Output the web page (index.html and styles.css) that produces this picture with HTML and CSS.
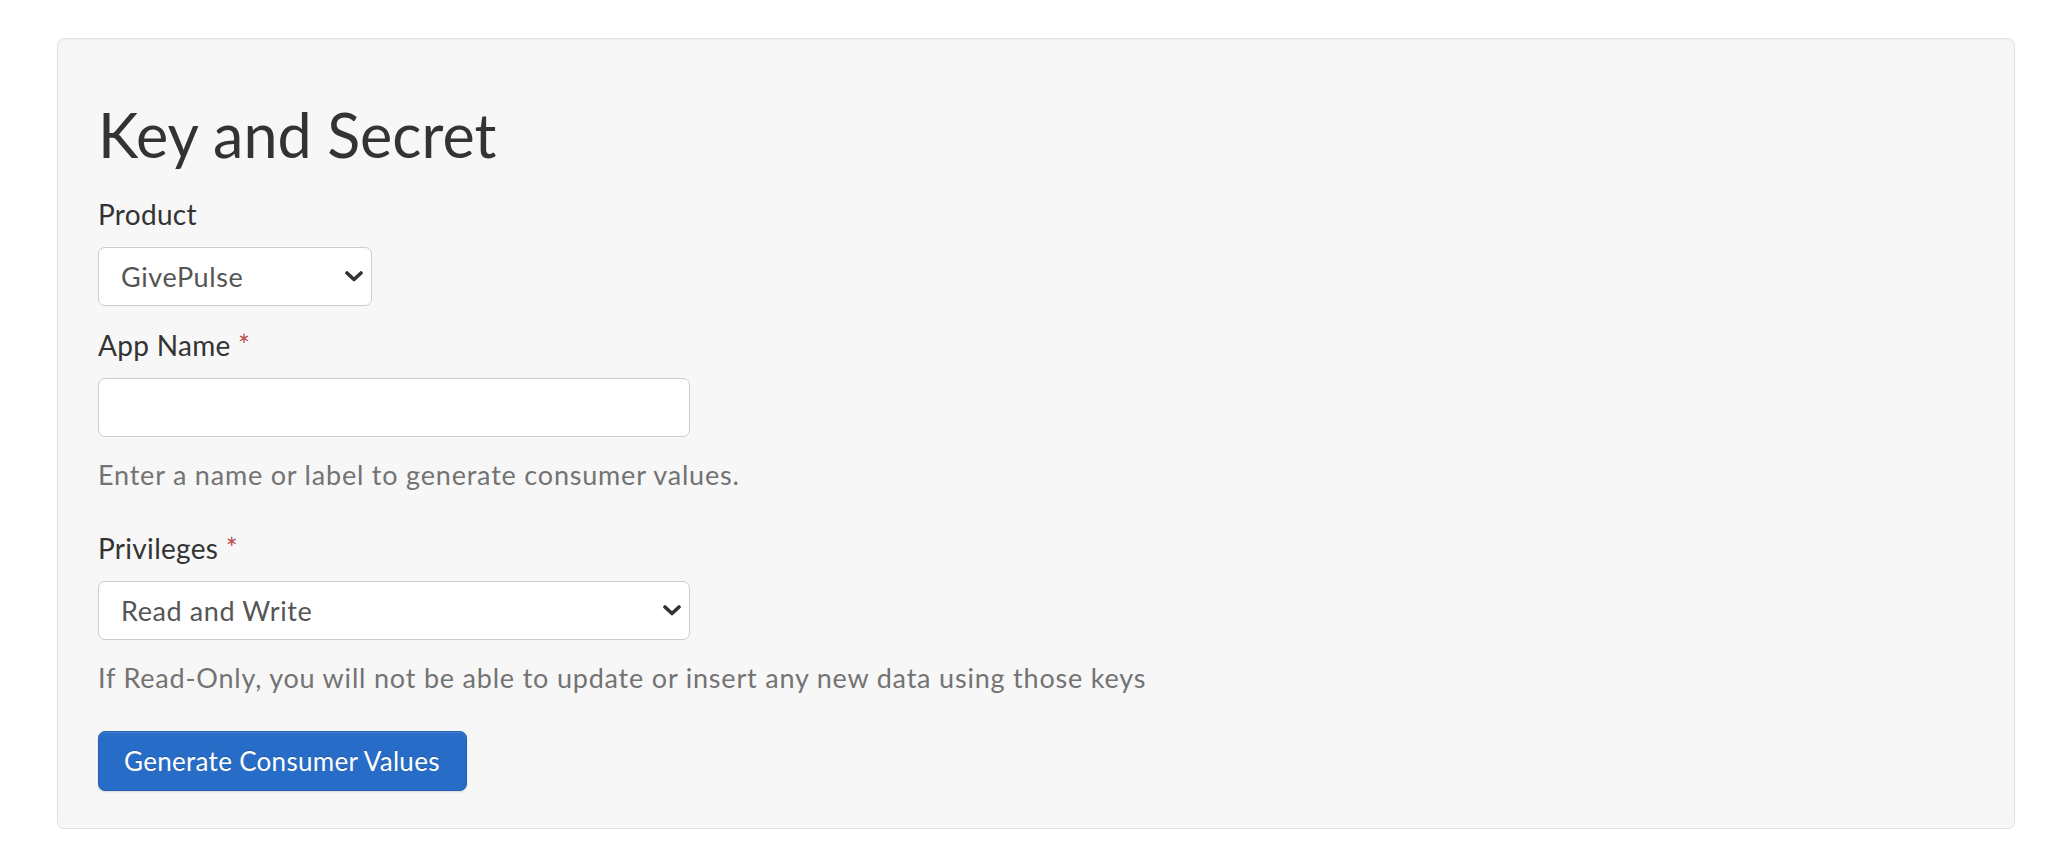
FILE: index.html
```html
<!DOCTYPE html>
<html lang="en">
<head>
<meta charset="utf-8">
<title>Key and Secret</title>
<link rel="stylesheet" href="styles.css">
</head>
<body>
<div class="page">
  <form class="well">
    <h1 class="title">Key and Secret</h1>

    <div class="form-group">
      <label class="label" for="product">Product</label>
      <div class="select-wrap select-small">
        <select id="product" class="control select">
          <option>GivePulse</option>
        </select>
        <svg class="chevron" viewBox="0 0 18 11" width="18" height="11" aria-hidden="true"><path d="M2 2 L9 8.5 L16 2" fill="none" stroke="#333" stroke-width="3.6" stroke-linecap="round" stroke-linejoin="round"/></svg>
      </div>
    </div>

    <div class="form-group">
      <label class="label" for="appname">App Name <span class="req">*</span></label>
      <input id="appname" class="control input" type="text">
      <p class="help">Enter a name or label to generate consumer values.</p>
    </div>

    <div class="form-group">
      <label class="label" for="priv">Privileges <span class="req">*</span></label>
      <div class="select-wrap select-wide">
        <select id="priv" class="control select">
          <option>Read and Write</option>
          <option>Read-Only</option>
        </select>
        <svg class="chevron" viewBox="0 0 18 11" width="18" height="11" aria-hidden="true"><path d="M2 2 L9 8.5 L16 2" fill="none" stroke="#333" stroke-width="3.6" stroke-linecap="round" stroke-linejoin="round"/></svg>
      </div>
      <p class="help">If Read-Only, you will not be able to update or insert any new data using those keys</p>
    </div>

    <button type="button" class="btn">Generate Consumer Values</button>
  </form>
</div>
</body>
</html>
```

FILE: styles.css
```css
html, body {
  margin: 0;
  padding: 0;
  background: #ffffff;
}

.page {
  padding: 38px 55px 0 57px;
  font-family: Lato, "Noto Sans", sans-serif;
  color: #333333;
}

.well {
  display: flex;
  flex-direction: column;
  align-items: flex-start;
  background: #f7f7f7;
  border: 1px solid #e2e2e2;
  border-radius: 7px;
  box-shadow: inset 0 1px 2px rgba(0, 0, 0, 0.04);
  padding: 59px 40px 37px 40px;
}

.title {
  margin: 0 0 27px 0;
  font-size: 61px;
  line-height: 69px;
  font-weight: 400;
  color: #333333;
  position: relative;
  top: 2px;
}

.form-group {
  display: flex;
  flex-direction: column;
  align-items: flex-start;
  margin-bottom: 19px;
}

.label {
  display: block;
  font-size: 28px;
  line-height: 40px;
  margin-bottom: 13px;
  letter-spacing: 0.3px;
  color: #333333;
}

.req {
  color: #b94a48;
}

.control {
  box-sizing: border-box;
  height: 59px;
  margin: 0;
  background: #ffffff;
  border: 1.5px solid #cccccc;
  border-radius: 7px;
  font-family: Lato, "Noto Sans", sans-serif;
  font-size: 27px;
  letter-spacing: 0.6px;
  color: #555555;
  outline: none;
}

.input {
  width: 592px;
  padding: 0 22px;
}

.select-wrap {
  position: relative;
}

.select-small { width: 274px; }
.select-wide { width: 592px; }

.select {
  width: 100%;
  -webkit-appearance: none;
  appearance: none;
  padding: 0 40px 0 22px;
}

.chevron {
  position: absolute;
  right: 9px;
  top: 24px;
  pointer-events: none;
}

.help {
  margin: 19px 0 15px 0;
  font-size: 27px;
  line-height: 38px;
  letter-spacing: 0.8px;
  color: #737373;
}

.btn {
  box-sizing: border-box;
  height: 60px;
  width: 369px;
  padding: 0 25px;
  background: #276cc7;
  border: 1px solid #2462b8;
  border-radius: 7px;
  box-shadow: inset 0 1px 0 rgba(255, 255, 255, 0.15), 0 1px 2px rgba(0, 0, 0, 0.12);
  color: #ffffff;
  font-family: Lato, "Noto Sans", sans-serif;
  font-size: 26px;
  line-height: 58px;
  letter-spacing: 0.3px;
  white-space: nowrap;
  text-shadow: 0 -1px 0 rgba(0, 0, 0, 0.2);
  text-align: left;
  cursor: pointer;
}
```
